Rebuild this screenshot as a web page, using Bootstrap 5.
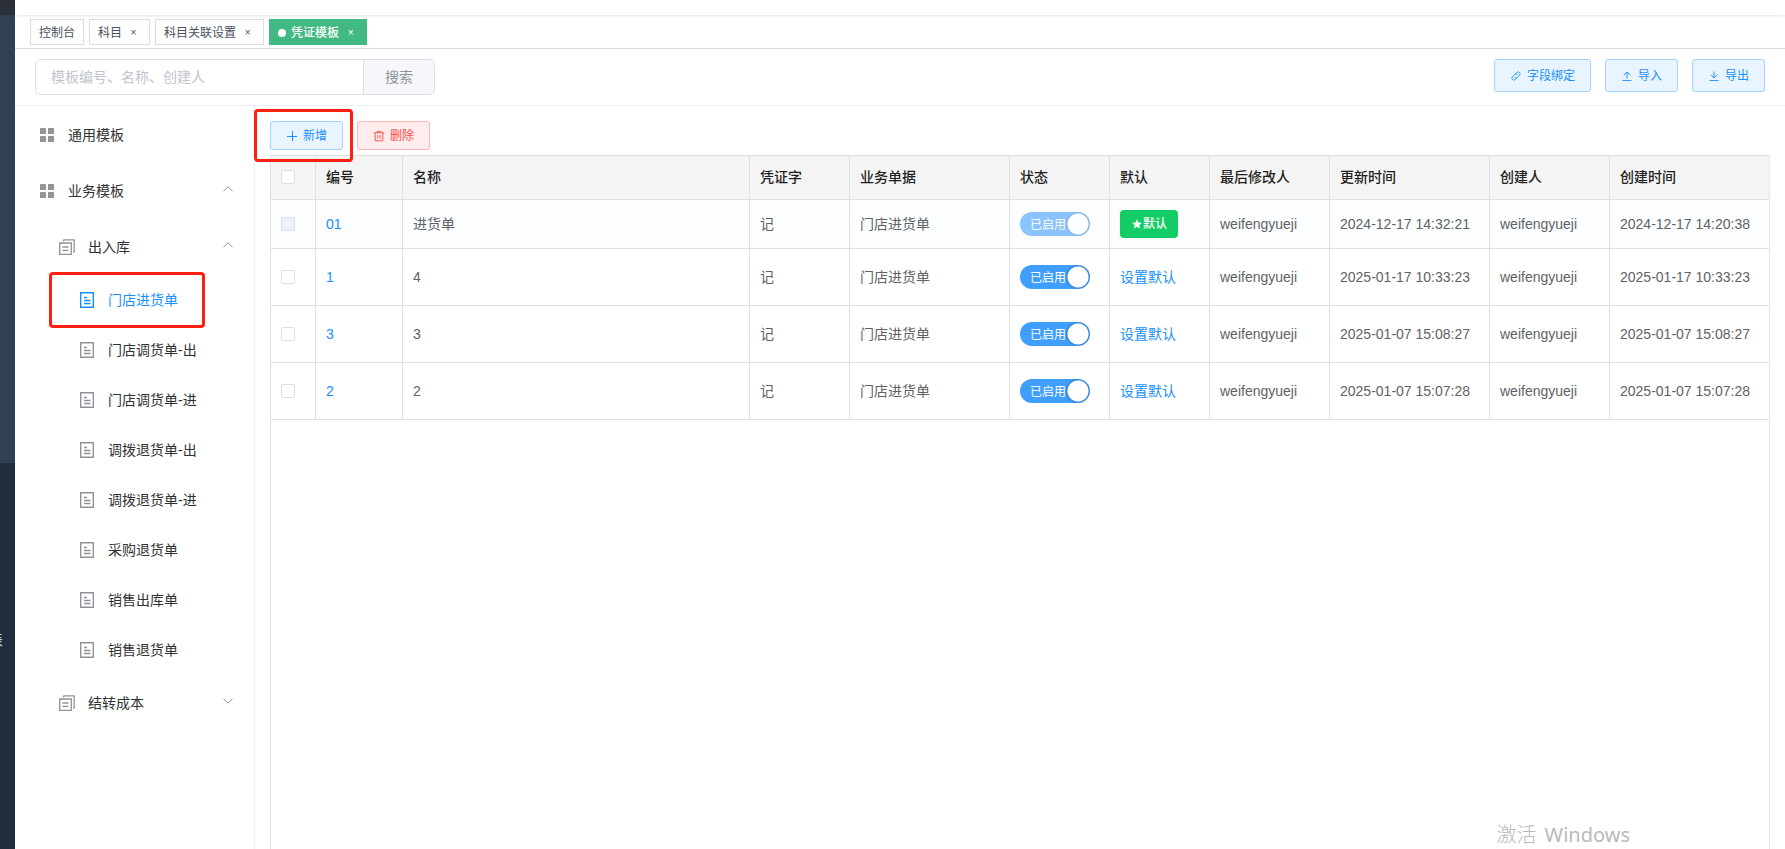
<!DOCTYPE html>
<html lang="zh-CN">
<head>
<meta charset="utf-8">
<meta name="viewport" content="width=device-width, initial-scale=1">
<title>凭证模板</title>
<link href="https://cdn.jsdelivr.net/npm/bootstrap@5.3.0/dist/css/bootstrap.min.css" rel="stylesheet">
<style>
  body { font-family: "Liberation Sans", "Noto Sans CJK SC", sans-serif; font-size: 14px; line-height: 20px; color: #303133; }
  a { text-decoration: none; color: #1890ff; }
  svg { display: block; flex: none; }

  .rail { width: 15px; flex: none; background: #1f2d3d; color: #fff; font-size: 14px; }
  .rail-logo { height: 15px; background: #2b2f3a; }
  .rail-menu { height: 448px; background: #304156; }
  .rail-link { margin-top: 167px; width: 3px; height: 20px; direction: rtl; color: #bfcbd9; }

  .topbar { height: 15px; box-shadow: 0 1px 3px rgba(0, 21, 41, .12); }
  .tags { height: 34px; padding: 4px 15px; gap: 5px; border-bottom: 1px solid #d8dce5; font-size: 12px; }
  .tag { height: 26px; padding: 2px 8px 0; border: 1px solid #d8dce5; color: #495060; }
  .tag-x { padding: 0; margin-left: 4px; width: 15px; border: 0; background: none; color: inherit; font-size: 10px; line-height: 16px; }
  .tag.active { background: #42b983; border-color: #42b983; color: #fff; font-weight: 500; }
  .tag-dot { width: 8px; height: 8px; margin-right: 5px; border-radius: 50%; background: #fff; }

  .toolbar { height: 57px; padding: 10px 20px 0; border-bottom: 1px solid #ebeef5; }
  .search { width: 400px; }
  .search .form-control { height: 36px; padding: 0 15px; font-size: 14px; border-color: #dcdfe6; }
  .search .form-control::placeholder { color: #c0c4cc; }
  .search .btn { width: 72px; padding: 0; font-size: 14px; color: #909399; background: #f5f7fa; border-color: #dcdfe6; }

  .act { display: flex; align-items: center; justify-content: center; gap: 5px; height: 29px; padding: 0 15px; border-radius: 3px; font-size: 12px; line-height: 16px; }
  .act-lg { height: 33px; }
  .act-blue { color: #1890ff; background: #e8f4ff; border-color: #a3d3ff; }
  .act-red { color: #ff4949; background: #ffeded; border-color: #ffb6b6; }
  .gap-act { gap: 14px; }

  .side { width: 240px; flex: none; padding-top: 1px; border-right: 1px solid #ebeef5; }
  .item { display: flex; align-items: center; gap: 13px; height: 56px; padding: 0 21px 0 24px; color: #303133; }
  .item svg { color: #909399; }
  .item-sub { gap: 12px; padding-left: 43px; }
  .item-leaf { height: 50px; padding-left: 64px; }
  .item-leaf.active, .item-leaf.active svg { color: #1890ff; }
  .item .arrow { margin-left: auto; margin-bottom: 4px; }

  .marked { position: absolute; border: 3px solid #fd2012; border-radius: 4px; pointer-events: none; }
  .marked-item { inset: -3px 49px -3px 34px; }
  .marked-add { inset: -12px -10px -12px -16px; }

  .main { padding: 15px 15px 0; }
  .grid-box { margin-top: 5px; border: 1px solid #dfe0e2; border-right-color: #e6e8f3; border-bottom: 0; }
  .data { table-layout: fixed; width: 100%; border-collapse: separate; border-spacing: 0; color: #606266; }
  .data th, .data td { padding: 0 10px; border-right: 1px solid #dfe0e2; border-bottom: 1px solid #dfe0e2; white-space: nowrap; vertical-align: middle; }
  .data tr > :last-child { border-right: 0; }
  .data th { height: 44px; padding-bottom: 2px; background: #f4f4f4; color: #1f1f1f; font-weight: 500; }
  .data td { height: 57px; }
  .data .row-first td { height: 49px; background: #fbfdff; }
  .w-check { width: 45px; } .w-code { width: 87px; } .w-s { width: 100px; }
  .w-m { width: 120px; } .w-l { width: 160px; } .w-end { width: 159px; }
  .data .form-check-input { display: block; width: 14px; height: 14px; margin: 0; border-color: #dcdfe6; border-radius: 2px; }
  .data .form-check-input:disabled { background-color: #edf2fc; opacity: 1; }

  .toggle { position: relative; display: block; width: 70px; height: 24px; }
  .toggle input { appearance: none; display: block; width: 70px; height: 24px; margin: 0; border-radius: 12px;
    background: radial-gradient(circle at 58px 12px, #fff 10px, rgba(20, 60, 110, .25) 11px, transparent 13px) #409eff; }
  .toggle span { position: absolute; left: 10px; top: 4px; color: #fff; font-size: 12px; line-height: 18px; }
  .toggle-off { opacity: .6; }
  .chosen { display: inline-flex; align-items: center; gap: 1px; height: 28px; padding: 0 11px 0 12px; border: 0; border-radius: 4px; background: #13ce66; color: #fff; font-size: 12px; font-weight: 500; }
  .notice { position: absolute; right: 155px; bottom: 0; display: flex; gap: 8px; color: #b9b9b9; font: 20px/28px "Noto Sans", "Noto Sans CJK SC", sans-serif; }
</style>
</head>
<body class="bg-white">
<svg class="d-none" xmlns="http://www.w3.org/2000/svg">
  <symbol id="i-grid" viewBox="0 0 14 14"><path fill="currentColor" d="M.5 0h5q.5 0 .5.5v5q0 .5-.5.5h-5Q0 6 0 5.500v-5Q0 0 .5 0zM8.500 0h5q.5 0 .5.5v5q0 .5-.5.5h-5Q8 6 8 5.500v-5Q8 0 8.500 0zM.5 8h5q.5 0 .5.5v5q0 .5-.5.5h-5Q0 14 0 13.500v-5Q0 8 .5 8zM8.500 8h5q.5 0 .5.5v5q0 .5-.5.5h-5Q8 14 8 13.500v-5Q8 8 8.500 8z"/></symbol>
  <symbol id="i-docs" viewBox="0 0 16 16"><path fill="none" stroke="currentColor" stroke-width="1.300" d="M.7 4h11.600v11.300H.7zM4.500.8h10.700v12.400M4.500.8v1.600M15.200 13.200H14M3.500 8h6M3.500 11.300h6"/></symbol>
  <symbol id="i-doc" viewBox="0 0 14 16"><path fill="none" stroke="currentColor" stroke-width="1.400" d="M.7.7h12.600v14.600H.7zM4 5.500h3M4 8.500h6.500M4 11.500h6.500"/></symbol>
  <symbol id="i-up" viewBox="0 0 10 6"><path fill="none" stroke="currentColor" d="M.5 5.200 5 .8l4.500 4.400"/></symbol>
  <symbol id="i-down" viewBox="0 0 10 6"><path fill="none" stroke="currentColor" d="M.5.8 5 5.200 9.500.8"/></symbol>
  <symbol id="i-plus" viewBox="0 0 12 12"><path fill="none" stroke="currentColor" d="M1 6.500h10M6.500 1v10"/></symbol>
  <symbol id="i-trash" viewBox="0 0 12 12"><path fill="none" stroke="currentColor" stroke-width=".9" d="M.8 2.800h10.400M4 2.800V1.400h4v1.400M2.200 2.800v8h7.600v-8M4.800 5v3.600M7.200 5v3.600"/></symbol>
  <symbol id="i-link" viewBox="0 0 12 12"><g fill="none" stroke="currentColor" stroke-width=".8" transform="rotate(-45 6 6)"><path d="M5.500 8H3a2 2 0 0 1 0-4h3A2 2 0 0 1 8 6"/><path d="M6.500 4H9a2 2 0 0 1 0 4H6A2 2 0 0 1 4 6"/></g></symbol>
  <symbol id="i-upload" viewBox="0 0 12 12"><path fill="none" stroke="currentColor" stroke-width=".9" d="M1.500 10.500h9M6 8.500V2.200M2.700 5.200 6 2l3.300 3.200"/></symbol>
  <symbol id="i-download" viewBox="0 0 12 12"><path fill="none" stroke="currentColor" stroke-width=".9" d="M1.500 10.500h9M6 1.500v6.300M2.700 4.800 6 8l3.300-3.200"/></symbol>
  <symbol id="i-star" viewBox="0 0 10 10"><path fill="currentColor" d="m5 .2 1.400 3.200 3.500.3-2.600 2.300.8 3.500L5 7.700 1.900 9.500l.8-3.500L.1 3.700l3.500-.3z"/></symbol>
</svg>

<div class="d-flex vh-100 overflow-hidden position-relative">
  <aside class="rail overflow-hidden">
    <div class="rail-logo"></div>
    <div class="rail-menu"></div>
    <div class="rail-link overflow-hidden text-nowrap">报表</div>
  </aside>

  <div class="d-flex flex-column flex-grow-1">
    <div class="topbar"></div>
    <nav class="tags d-flex">
      <div class="tag d-flex align-items-center">控制台</div>
      <div class="tag d-flex align-items-center">科目<button class="tag-x" aria-label="关闭 科目">×</button></div>
      <div class="tag d-flex align-items-center">科目关联设置<button class="tag-x" aria-label="关闭 科目关联设置">×</button></div>
      <div class="tag active d-flex align-items-center"><span class="tag-dot"></span>凭证模板<button class="tag-x" aria-label="关闭 凭证模板">×</button></div>
    </nav>

    <header class="toolbar d-flex align-items-start justify-content-between">
      <div class="search input-group">
        <input type="text" class="form-control" placeholder="模板编号、名称、创建人" aria-label="模板编号、名称、创建人">
        <button class="btn" type="button">搜索</button>
      </div>
      <div class="d-flex gap-act">
        <button class="btn act act-lg act-blue"><svg width="12" height="12"><use href="#i-link"/></svg>字段绑定</button>
        <button class="btn act act-lg act-blue"><svg width="12" height="12"><use href="#i-upload"/></svg>导入</button>
        <button class="btn act act-lg act-blue"><svg width="12" height="12"><use href="#i-download"/></svg>导出</button>
      </div>
    </header>

    <div class="d-flex flex-grow-1">
      <nav class="side">
        <a href="#" class="item"><svg width="16" height="14"><use href="#i-grid"/></svg>通用模板</a>
        <a href="#" class="item"><svg width="16" height="14"><use href="#i-grid"/></svg>业务模板<svg class="arrow" width="10" height="6"><use href="#i-up"/></svg></a>
        <a href="#" class="item item-sub"><svg width="18" height="16"><use href="#i-docs"/></svg>出入库<svg class="arrow" width="10" height="6"><use href="#i-up"/></svg></a>
        <a href="#" class="item item-leaf active position-relative"><svg width="16" height="16"><use href="#i-doc"/></svg>门店进货单<span class="marked marked-item"></span></a>
        <a href="#" class="item item-leaf"><svg width="16" height="16"><use href="#i-doc"/></svg>门店调货单-出</a>
        <a href="#" class="item item-leaf"><svg width="16" height="16"><use href="#i-doc"/></svg>门店调货单-进</a>
        <a href="#" class="item item-leaf"><svg width="16" height="16"><use href="#i-doc"/></svg>调拨退货单-出</a>
        <a href="#" class="item item-leaf"><svg width="16" height="16"><use href="#i-doc"/></svg>调拨退货单-进</a>
        <a href="#" class="item item-leaf"><svg width="16" height="16"><use href="#i-doc"/></svg>采购退货单</a>
        <a href="#" class="item item-leaf"><svg width="16" height="16"><use href="#i-doc"/></svg>销售出库单</a>
        <a href="#" class="item item-leaf"><svg width="16" height="16"><use href="#i-doc"/></svg>销售退货单</a>
        <a href="#" class="item item-sub"><svg width="18" height="16"><use href="#i-docs"/></svg>结转成本<svg class="arrow" width="10" height="6"><use href="#i-down"/></svg></a>
      </nav>

      <main class="main d-flex flex-column flex-grow-1">
        <div class="d-flex gap-act">
          <div class="position-relative">
            <button class="btn act act-blue"><svg width="12" height="12"><use href="#i-plus"/></svg>新增</button>
            <span class="marked marked-add"></span>
          </div>
          <button class="btn act act-red"><svg width="12" height="12"><use href="#i-trash"/></svg>删除</button>
        </div>

        <div class="grid-box flex-grow-1">
          <table class="data">
            <thead>
              <tr>
                <th class="w-check"><input type="checkbox" class="form-check-input" aria-label="全选"></th>
                <th class="w-code">编号</th><th>名称</th><th class="w-s">凭证字</th><th class="w-l">业务单据</th>
                <th class="w-s">状态</th><th class="w-s">默认</th><th class="w-m">最后修改人</th>
                <th class="w-l">更新时间</th><th class="w-m">创建人</th><th class="w-end">创建时间</th>
              </tr>
            </thead>
            <tbody>
              <tr class="row-first">
                <td><input type="checkbox" class="form-check-input" disabled aria-label="选择 01"></td>
                <td><a href="#">01</a></td><td>进货单</td><td>记</td><td>门店进货单</td>
                <td><label class="toggle toggle-off"><input type="checkbox" role="switch" checked disabled><span>已启用</span></label></td>
                <td><button class="chosen"><svg width="10" height="10"><use href="#i-star"/></svg>默认</button></td>
                <td>weifengyueji</td><td>2024-12-17 14:32:21</td><td>weifengyueji</td><td>2024-12-17 14:20:38</td>
              </tr>
              <tr>
                <td><input type="checkbox" class="form-check-input" aria-label="选择 1"></td>
                <td><a href="#">1</a></td><td>4</td><td>记</td><td>门店进货单</td>
                <td><label class="toggle"><input type="checkbox" role="switch" checked><span>已启用</span></label></td>
                <td><a href="#">设置默认</a></td>
                <td>weifengyueji</td><td>2025-01-17 10:33:23</td><td>weifengyueji</td><td>2025-01-17 10:33:23</td>
              </tr>
              <tr>
                <td><input type="checkbox" class="form-check-input" aria-label="选择 3"></td>
                <td><a href="#">3</a></td><td>3</td><td>记</td><td>门店进货单</td>
                <td><label class="toggle"><input type="checkbox" role="switch" checked><span>已启用</span></label></td>
                <td><a href="#">设置默认</a></td>
                <td>weifengyueji</td><td>2025-01-07 15:08:27</td><td>weifengyueji</td><td>2025-01-07 15:08:27</td>
              </tr>
              <tr>
                <td><input type="checkbox" class="form-check-input" aria-label="选择 2"></td>
                <td><a href="#">2</a></td><td>2</td><td>记</td><td>门店进货单</td>
                <td><label class="toggle"><input type="checkbox" role="switch" checked><span>已启用</span></label></td>
                <td><a href="#">设置默认</a></td>
                <td>weifengyueji</td><td>2025-01-07 15:07:28</td><td>weifengyueji</td><td>2025-01-07 15:07:28</td>
              </tr>
            </tbody>
          </table>
        </div>
      </main>
    </div>
  </div>
  <div class="notice"><span class="fw-light">激活</span><span>Windows</span></div>
</div>
<script src="https://cdn.jsdelivr.net/npm/bootstrap@5.3.0/dist/js/bootstrap.bundle.min.js"></script>
</body>
</html>
